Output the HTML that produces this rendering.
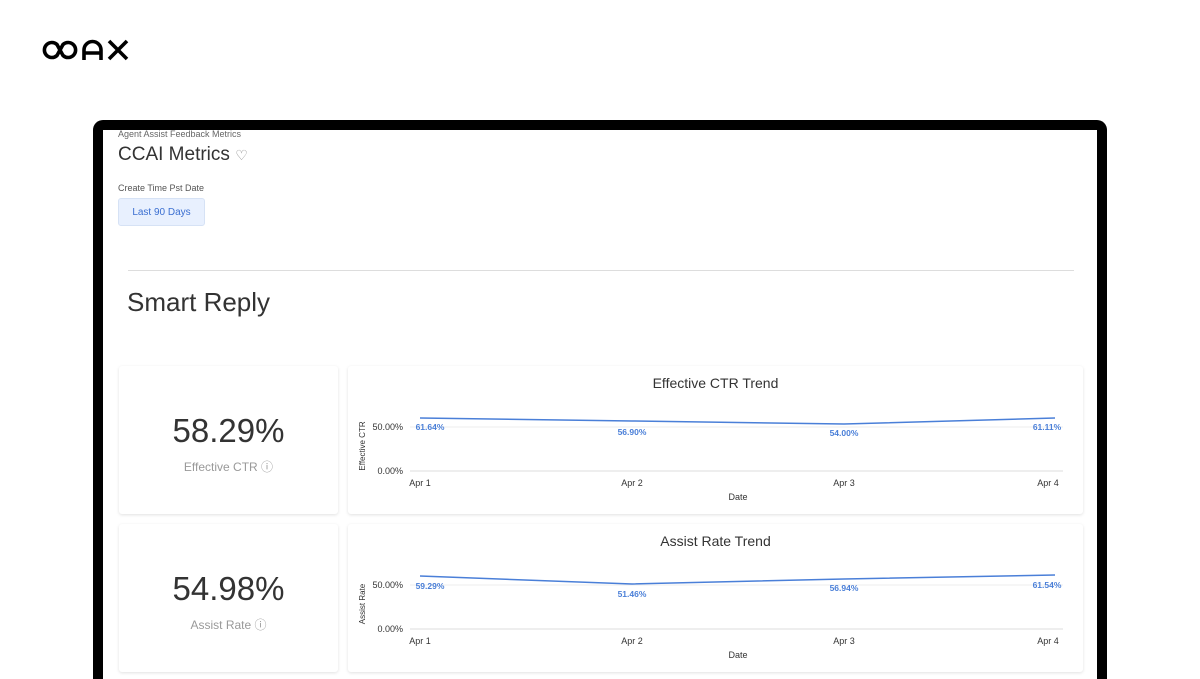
<!DOCTYPE html>
<html><head><style>
*{margin:0;padding:0;box-sizing:border-box}
html,body{width:1200px;height:679px;overflow:hidden}
body{background:#fff;font-family:"Liberation Sans",sans-serif;position:relative}
.a{position:absolute}
.frame{left:93px;top:120px;width:1014px;height:559px;background:#000;border-radius:10px 10px 0 0}
.inner{left:103px;top:130px;width:994px;height:549px;background:#fff}
.card{background:#fff;box-shadow:0 1px 3px rgba(0,0,0,.12);border-radius:3px}
.big{font-size:33px;color:#333;width:219px;text-align:center}
.lab{font-size:12px;color:#999;width:219px;text-align:center}
.t{font-size:14px;color:#333;text-align:center;width:735px}
</style></head><body>
<svg class="a" style="left:0;top:0" width="140" height="70">
<g fill="none" stroke="#000" stroke-width="3.6" stroke-linejoin="round">
<path d="M57 44.5 A7.5 7.5 0 1 0 57 55.5 L63 44.5 A7.5 7.5 0 1 1 63 55.5 Z"/>
<path d="M84 60 V50 A8.5 8.5 0 0 1 101 50 V60 M84 53 H101"/>
<path d="M109 41 L127 59 M127 41 L109 59"/>
</g></svg>
<div class="a frame"></div>
<div class="a inner"></div>
<div class="a" style="left:118px;top:129px;font-size:9px;color:#666">Agent Assist Feedback Metrics</div>
<div class="a" style="left:118px;top:144px;font-size:19px;color:#333">CCAI Metrics <span style="font-size:14px;color:#888">♡</span></div>
<div class="a" style="left:118px;top:183px;font-size:9px;color:#555">Create Time Pst Date</div>
<div class="a" style="left:118px;top:198px;width:87px;height:28px;background:#e8f0fe;border:1px solid #d6e2f5;border-radius:3px;font-size:10px;color:#3b6fd1;text-align:center;line-height:27px">Last 90 Days</div>
<div class="a" style="left:128px;top:270px;width:946px;height:1px;background:#ddd"></div>
<div class="a" style="left:127px;top:287px;font-size:26px;color:#333">Smart Reply</div>

<div class="a card" style="left:119px;top:366px;width:219px;height:148px"></div>
<div class="a big" style="left:119px;top:412px">58.29%</div>
<div class="a lab" style="left:119px;top:458px">Effective CTR ⓘ</div>
<div class="a card" style="left:348px;top:366px;width:735px;height:148px"></div>
<div class="a t" style="left:348px;top:375px">Effective CTR Trend</div>

<div class="a card" style="left:119px;top:524px;width:219px;height:148px"></div>
<div class="a big" style="left:119px;top:570px">54.98%</div>
<div class="a lab" style="left:119px;top:616px">Assist Rate ⓘ</div>
<div class="a card" style="left:348px;top:524px;width:735px;height:148px"></div>
<div class="a t" style="left:348px;top:533px">Assist Rate Trend</div>

<svg class="a" style="left:348px;top:366px" width="735" height="306">
<g font-family="Liberation Sans" font-size="9" fill="#333">
<line x1="62" y1="61" x2="715" y2="61" stroke="#eee"/>
<line x1="62" y1="105" x2="715" y2="105" stroke="#ddd"/>
<text x="55" y="64" text-anchor="end">50.00%</text>
<text x="55" y="108" text-anchor="end">0.00%</text>
<text transform="translate(17,80) rotate(-90)" text-anchor="middle" font-size="8">Effective CTR</text>
<polyline points="72,52 284,55 496,58 707,52" fill="none" stroke="#4a7fd8" stroke-width="1.5"/>
<text x="72" y="120" text-anchor="middle">Apr 1</text><text x="284" y="120" text-anchor="middle">Apr 2</text><text x="496" y="120" text-anchor="middle">Apr 3</text><text x="700" y="120" text-anchor="middle">Apr 4</text>
<text x="390" y="134" text-anchor="middle">Date</text>
<g fill="#4a7fd8" font-weight="bold" font-size="8.5"><text x="82" y="64" text-anchor="middle">61.64%</text><text x="284" y="69" text-anchor="middle">56.90%</text><text x="496" y="70" text-anchor="middle">54.00%</text><text x="699" y="64" text-anchor="middle">61.11%</text></g>

<g transform="translate(0,158)">
<line x1="62" y1="61" x2="715" y2="61" stroke="#eee"/>
<line x1="62" y1="105" x2="715" y2="105" stroke="#ddd"/>
<text x="55" y="64" text-anchor="end">50.00%</text>
<text x="55" y="108" text-anchor="end">0.00%</text>
<text transform="translate(17,80) rotate(-90)" text-anchor="middle" font-size="8">Assist Rate</text>
<polyline points="72,52 284,60 496,55 707,51" fill="none" stroke="#4a7fd8" stroke-width="1.5"/>
<text x="72" y="120" text-anchor="middle">Apr 1</text><text x="284" y="120" text-anchor="middle">Apr 2</text><text x="496" y="120" text-anchor="middle">Apr 3</text><text x="700" y="120" text-anchor="middle">Apr 4</text>
<text x="390" y="134" text-anchor="middle">Date</text>
<g fill="#4a7fd8" font-weight="bold" font-size="8.5"><text x="82" y="65" text-anchor="middle">59.29%</text><text x="284" y="73" text-anchor="middle">51.46%</text><text x="496" y="67" text-anchor="middle">56.94%</text><text x="699" y="64" text-anchor="middle">61.54%</text></g>
</g></g></svg>
</body></html>
